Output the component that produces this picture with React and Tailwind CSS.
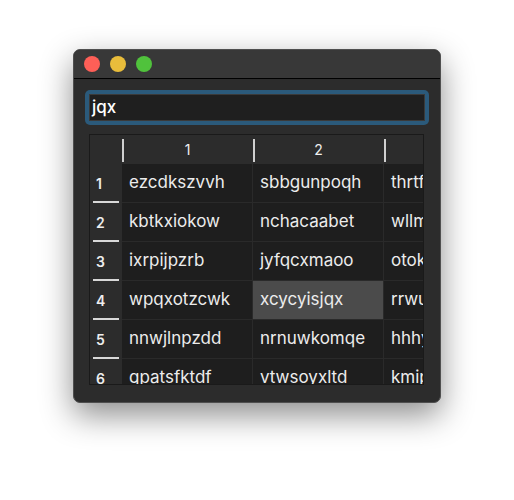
import React from 'react';

const ROWS = [
    ['ezcdkszvvh', 'sbbgunpoqh', 'thrtfmlqoa'],
    ['kbtkxiokow', 'nchacaabet', 'wllmgrsuef'],
    ['ixrpijpzrb', 'jyfqcxmaoo', 'otokjdvnhe'],
    ['wpqxotzcwk', 'xcycyisjqx', 'rrwuqbtlaz'],
    ['nnwjlnpzdd', 'nrnuwkomqe', 'hhhyfcrbxo'],
    ['gpatsfktdf', 'vtwsoyxltd', 'kmipazegnr'],
];

const SELECTED = { row: 3, col: 1 };

function HeaderCell({ label }) {
    return (
        <div className="relative w-[131px] shrink-0 h-full flex items-center justify-center text-[14px] text-[#f0f0f0]">
            <span className="absolute left-0 top-[4px] bottom-[2px] w-[2px] bg-[#cfcfcf]" />
            {label}
        </div>
    );
}

export default function App() {
    return (
        <div className="w-[514px] h-[500px] bg-white pt-[49px] pl-[73px] font-['Inter','Liberation_Sans',sans-serif]">
            <div className="w-[368px] h-[354px] rounded-[7px] bg-[#2c2c2c] border border-[#4f4f4f] shadow-[0_12px_32px_rgba(0,0,0,0.45)] overflow-hidden flex flex-col">
                {/* title bar */}
                <div className="h-[29px] shrink-0 bg-[#383838] border-b border-black flex items-center gap-[10px] pl-[10px]">
                    <span className="w-[16px] h-[16px] rounded-full bg-[#fe5f57]" />
                    <span className="w-[16px] h-[16px] rounded-full bg-[#e9bd3b]" />
                    <span className="w-[16px] h-[16px] rounded-full bg-[#50c23c]" />
                </div>

                <div className="flex-1 flex flex-col pt-[11px] px-[11px]">
                    {/* search field */}
                    <div className="h-[35px] rounded-[5px] bg-[#2b5a7b] p-[4px]">
                        <div className="h-full bg-[#1f1f1f] border border-[#3a3a3a] flex items-center pl-[2px] text-[17px] font-medium text-white">
                            jqx
                        </div>
                    </div>

                    {/* table */}
                    <div className="mt-[9px] ml-[4px] w-[335px] h-[251px] border border-[#1a1a1a] overflow-hidden bg-[#1e1e1e]">
                        <div className="w-[450px]">
                            <div className="h-[29px] flex bg-[#2c2c2c]">
                                <div className="w-[32px] shrink-0" />
                                <HeaderCell label="1" />
                                <HeaderCell label="2" />
                                <HeaderCell label="3" />
                            </div>
                            {ROWS.map((row, r) => (
                                <div key={r} className="h-[39px] flex">
                                    <div className="relative w-[32px] shrink-0 bg-[#2c2c2c] flex items-center pl-[6px] text-[14px] font-semibold text-[#eeeeee]">
                                        {r + 1}
                                        <span className="absolute left-[3px] right-[3px] bottom-0 h-[2px] bg-[#d8d8d8]" />
                                    </div>
                                    {row.map((cell, c) => (
                                        <div
                                            key={c}
                                            className={`w-[131px] shrink-0 flex items-center pl-[7px] text-[17px] text-[#ececec] border-r border-b border-[#2a2a2a] ${r === SELECTED.row && c === SELECTED.col ? 'bg-[#4b4b4b]' : 'bg-[#1e1e1e]'}`}
                                        >
                                            {cell}
                                        </div>
                                    ))}
                                </div>
                            ))}
                        </div>
                    </div>
                </div>
            </div>
        </div>
    );
}
